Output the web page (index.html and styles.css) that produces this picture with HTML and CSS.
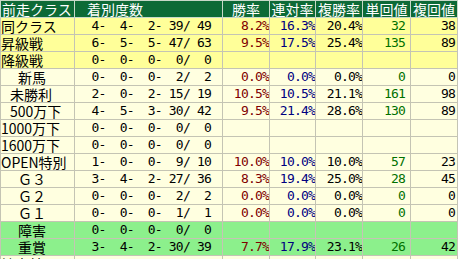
FILE: index.html
```html
<!DOCTYPE html>
<html lang="ja">
<head>
  <meta charset="UTF-8" />
  <title>前走クラス別成績</title>
  <link rel="stylesheet" href="styles.css">
</head>
<body>
  <table class="stats">
    <colgroup>
      <col class="c-label">
      <col class="c-count">
      <col class="c-rate">
      <col class="c-rate2">
      <col class="c-rate">
      <col class="c-ret">
      <col class="c-rate">
    </colgroup>
    <thead>
      <tr>
        <th class="h-label">前走クラス</th>
        <th class="h-count">着別度数</th>
        <th>勝率</th>
        <th>連対率</th>
        <th>複勝率</th>
        <th>単回値</th>
        <th>複回値</th>
      </tr>
    </thead>
    <tbody>
      <tr class="main">
        <td class="label">同クラス</td>
        <td class="num count">  4-  4-  2- 39/ 49</td>
        <td class="num win"> 8.2%</td><td class="num rentai">16.3%</td><td class="num fuku">20.4%</td>
        <td class="num tan">32</td><td class="num fret">38</td>
      </tr>
      <tr class="main">
        <td class="label">昇級戦</td>
        <td class="num count">  6-  5-  5- 47/ 63</td>
        <td class="num win"> 9.5%</td><td class="num rentai">17.5%</td><td class="num fuku">25.4%</td>
        <td class="num tan">135</td><td class="num fret">89</td>
      </tr>
      <tr class="main">
        <td class="label">降級戦</td>
        <td class="num count">  0-  0-  0-  0/  0</td>
        <td></td><td></td><td></td><td></td><td></td>
      </tr>
      <tr class="sub">
        <td class="label ind-wide">新馬</td>
        <td class="num count">  0-  0-  0-  2/  2</td>
        <td class="num win"> 0.0%</td><td class="num rentai"> 0.0%</td><td class="num fuku"> 0.0%</td>
        <td class="num tan">0</td><td class="num fret">0</td>
      </tr>
      <tr class="sub">
        <td class="label ind-half">未勝利</td>
        <td class="num count">  2-  0-  2- 15/ 19</td>
        <td class="num win">10.5%</td><td class="num rentai">10.5%</td><td class="num fuku">21.1%</td>
        <td class="num tan">161</td><td class="num fret">98</td>
      </tr>
      <tr class="sub">
        <td class="label ind-half">500万下</td>
        <td class="num count">  4-  5-  3- 30/ 42</td>
        <td class="num win"> 9.5%</td><td class="num rentai">21.4%</td><td class="num fuku">28.6%</td>
        <td class="num tan">130</td><td class="num fret">89</td>
      </tr>
      <tr class="sub">
        <td class="label">1000万下</td>
        <td class="num count">  0-  0-  0-  0/  0</td>
        <td></td><td></td><td></td><td></td><td></td>
      </tr>
      <tr class="sub">
        <td class="label">1600万下</td>
        <td class="num count">  0-  0-  0-  0/  0</td>
        <td></td><td></td><td></td><td></td><td></td>
      </tr>
      <tr class="sub">
        <td class="label">OPEN特別</td>
        <td class="num count">  1-  0-  0-  9/ 10</td>
        <td class="num win">10.0%</td><td class="num rentai">10.0%</td><td class="num fuku">10.0%</td>
        <td class="num tan">57</td><td class="num fret">23</td>
      </tr>
      <tr class="sub">
        <td class="label ind-g">Ｇ３</td>
        <td class="num count">  3-  4-  2- 27/ 36</td>
        <td class="num win"> 8.3%</td><td class="num rentai">19.4%</td><td class="num fuku">25.0%</td>
        <td class="num tan">28</td><td class="num fret">45</td>
      </tr>
      <tr class="sub">
        <td class="label ind-g">Ｇ２</td>
        <td class="num count">  0-  0-  0-  2/  2</td>
        <td class="num win"> 0.0%</td><td class="num rentai"> 0.0%</td><td class="num fuku"> 0.0%</td>
        <td class="num tan">0</td><td class="num fret">0</td>
      </tr>
      <tr class="sub">
        <td class="label ind-g">Ｇ１</td>
        <td class="num count">  0-  0-  0-  1/  1</td>
        <td class="num win"> 0.0%</td><td class="num rentai"> 0.0%</td><td class="num fuku"> 0.0%</td>
        <td class="num tan">0</td><td class="num fret">0</td>
      </tr>
      <tr class="green">
        <td class="label ind-wide">障害</td>
        <td class="num count">  0-  0-  0-  0/  0</td>
        <td></td><td></td><td></td><td></td><td></td>
      </tr>
      <tr class="green">
        <td class="label ind-wide">重賞</td>
        <td class="num count">  3-  4-  2- 30/ 39</td>
        <td class="num win"> 7.7%</td><td class="num rentai">17.9%</td><td class="num fuku">23.1%</td>
        <td class="num tan">26</td><td class="num fret">42</td>
      </tr>
      <tr class="sub">
        <td class="label">地方競馬</td>
        <td class="num count">  0-  0-  1-  4/  5</td>
        <td class="num win"> 0.0%</td><td class="num rentai"> 0.0%</td><td class="num fuku">20.0%</td>
        <td class="num tan">0</td><td class="num fret">36</td>
      </tr>
    </tbody>
  </table>
</body>
</html>
```

FILE: styles.css
```css
body {
  margin: 0;
  padding: 0;
  background: #ffffff;
  overflow: hidden;
}
.stats {
  border-collapse: collapse;
  table-layout: fixed;
  width: 457px;
  font-family: "Noto Sans CJK JP", sans-serif;
  font-size: 14px;
  color: #000;
}
.c-label { width: 74px; }
.c-count { width: 148px; }
.c-rate { width: 47px; }
.c-rate2 { width: 46px; }
.c-ret { width: 48px; }
.stats th,
.stats td {
  height: 16px;
  padding: 0;
  border: 1px solid #c4c4b4;
  line-height: 16px;
  white-space: pre;
  overflow: hidden;
}
.stats th {
  background: #0d6a36;
  color: #ffffff;
  font-weight: normal;
  text-align: center;
  border-color: #c8d8c8;
}
.stats th.h-label {
  text-align: left;
  padding-left: 1px;
}
.stats th.h-count {
  text-align: left;
  padding-left: 12px;
}
.main td { background: #ffff99; }
.sub td { background: #ffffe0; }
.green td { background: #8cf08c; }
.label {
  padding-left: 1px;
}
.stats td.ind-wide { padding-left: 17px; }
.stats td.ind-half { padding-left: 9px; }
.stats td.ind-g { padding-left: 17px; }
.num {
  font-family: "DejaVu Sans Mono", monospace;
  font-size: 13px;
  letter-spacing: -0.8px;
  text-align: right;
  padding-right: 3px;
}
.stats td.count { padding-right: 11px; }
.stats td.tan { padding-right: 5px; }
.stats td.fret { padding-right: 2px; }
.win { color: #800000; }
.rentai { color: #000080; }
.fuku { color: #000000; }
.tan { color: #007000; }
.fret { color: #000000; }
```
